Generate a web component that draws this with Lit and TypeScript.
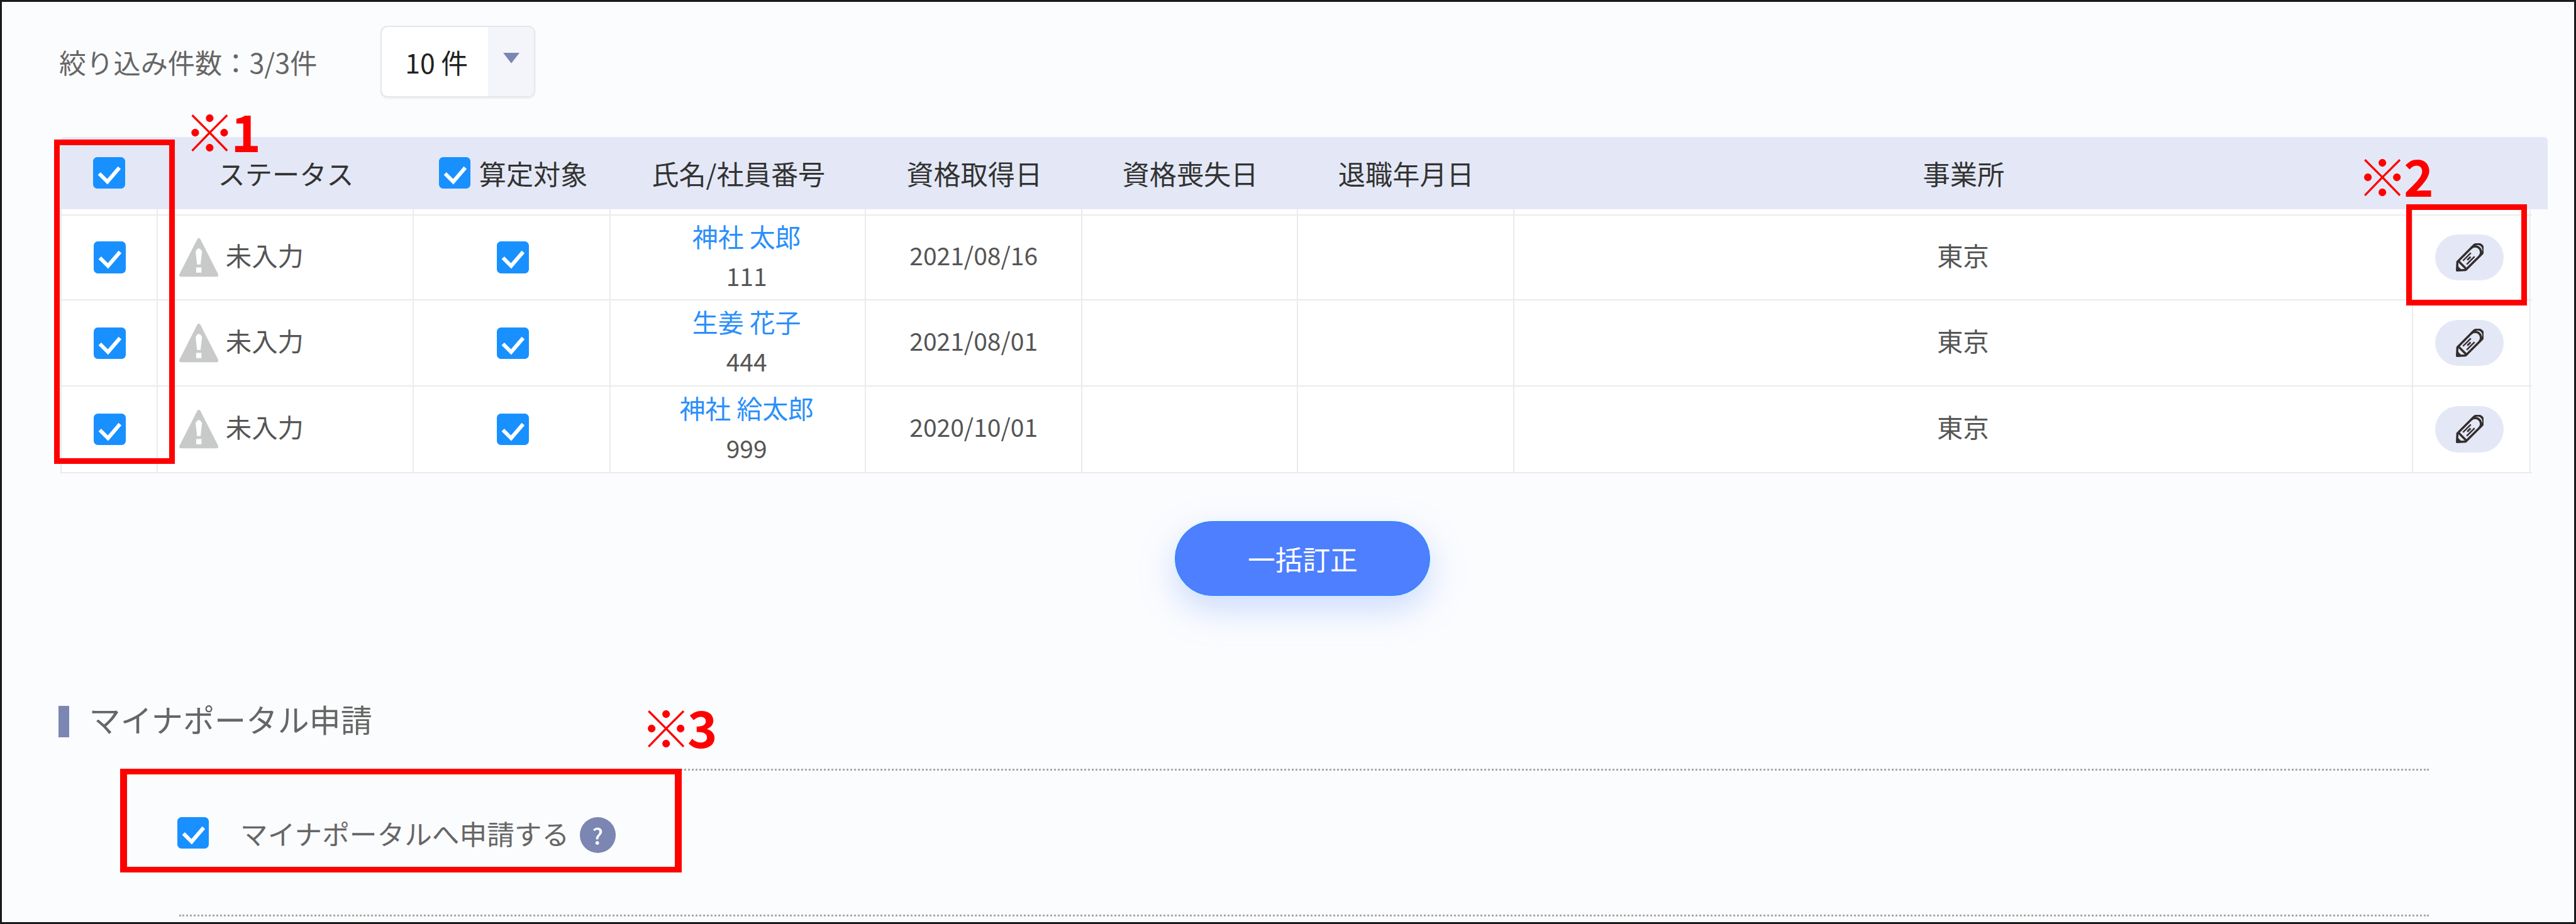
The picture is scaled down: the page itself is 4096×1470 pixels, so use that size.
import { LitElement, html, css } from "lit";
import { customElement } from "lit/decorators.js";

const rows = [
  { name: "神社 太郎", id: "111", date: "2021/08/16", h: 146 },
  { name: "生姜 花子", id: "444", date: "2021/08/01", h: 147.5 },
  { name: "神社 給太郎", id: "999", date: "2020/10/01", h: 148 },
];

const check = html`<span class="cb"><svg viewBox="0 0 54 54"><path d="M10.5 28 L24.5 42 L45 18" fill="none" stroke="#fff" stroke-width="6.5"/></svg></span>`;
const warn = html`<svg class="warn" viewBox="0 0 67 68"><path d="M33.5 4 L64 64 H3 Z" fill="#c8cac9" stroke="#c8cac9" stroke-width="6" stroke-linejoin="round"/><path d="M28 24 Q33.5 13 39 24 L36.5 46 H30.5 Z" fill="#fff"/><rect x="29" y="51" width="9" height="9" fill="#fff"/></svg>`;
const pencil = html`<svg class="pencil" viewBox="0 0 48 49"><g transform="translate(3 46.5) rotate(-45)" fill="none" stroke="#332e2e" stroke-width="3.8" stroke-linejoin="round"><path d="M0 0 L11 -10 H50 A10 10 0 0 1 50 10 H11 Z"/><path d="M0 0 L6 -5.5 L6 5.5 Z" fill="#332e2e" stroke-width="1"/><path d="M13 -10 V10"/><path d="M44 -10 A10 10 0 0 1 44 10"/><path d="M19 -4.5 H38" stroke-width="2.6"/><path d="M19 4.5 H38" stroke-width="2.6"/><path d="M25 0 H33" stroke-width="3"/></g></svg>`;

@customElement("app-root")
export class AppRoot extends LitElement {
  static styles = css`
    :host { display: block; width: 4096px; height: 1470px; overflow: hidden; }
    .page {
      zoom: 0.92922;
      position: relative;
      box-sizing: border-box;
      width: 4408px;
      height: 1582px;
      border: 4px solid #1a1a1a;
      background: #fbfcfe;
      padding: 41px 0 0 98px;
      font-family: "Noto Sans CJK JP", "Noto Sans", sans-serif;
      color: #555;
      font-size: 42px;
    }
    .toolbar { display: flex; align-items: center; height: 123px; }
    .count { width: 550px; color: #666; font-size: 46.5px; white-space: nowrap; }
    .select {
      display: flex; width: 265px; height: 123px; box-sizing: border-box;
      border: 3px solid #e6e7ec; border-radius: 12px; background: #fff; overflow: hidden;
      box-shadow: 0 2px 3px rgba(0, 0, 0, 0.06);
    }
    .select .val { flex: 1; display: flex; align-items: center; padding-left: 40px; color: #222; font-size: 46px; white-space: nowrap; }
    .select .btn { width: 79px; background: #f4f5fb; display: flex; justify-content: center; padding-top: 44px; box-sizing: border-box; }
    .arrow { width: 28px; height: 18px; }
    .table { margin: 67px 0 0 2px; width: 4256px; }
    .row { display: grid; grid-template-columns: 167px 438px 337px 437px 370px 369px 370px 1538px 201px; }
    .thead { width: 4256px; height: 124px; background: #e4e8f6; border-radius: 6px 6px 0 0; color: #333; font-size: 46.5px; }
    .thead .row { height: 100%; }
    .th, .td { display: flex; align-items: center; justify-content: center; box-sizing: border-box; }
    .th { gap: 15px; white-space: nowrap; }
    .th-target { padding-left: 3px; }
    .tbody { width: 4229px; background: #fff; }
    .tbody .row { border-bottom: 3px solid #ebebeb; box-sizing: border-box; }
    .tbody .spacer { height: 10.5px; }
    .td { border-right: 3px solid #ebebeb; white-space: nowrap; }
    .td:first-child { border-left: 3px solid #ebebeb; padding-left: 2px; }
    .cell-status { justify-content: flex-start; padding-left: 36px; gap: 13px; }
    .cell-check { padding-left: 4px; }
    .txt { margin-top: -10px; }
    .txt-lg { margin-top: -10px; font-size: 44.5px; }
    .name { display: flex; flex-direction: column; align-items: center; line-height: 67px; margin: -5px 0 0 30px; }
    .name a { color: #2a8ffb; text-decoration: none; font-size: 44px; }
    .cb { display: block; width: 54px; height: 54px; background: #1890ff; border-radius: 7px; flex: none; }
    .cb svg { display: block; width: 100%; height: 100%; }
    .warn { width: 67px; height: 68px; flex: none; }
    .pill { display: flex; align-items: center; justify-content: center; width: 118px; height: 79px; border-radius: 40px; background: #e4e8f6; margin-left: -6px; }
    .pencil { width: 48px; height: 49px; }
    .actions { width: 4256px; margin-top: 82px; display: flex; justify-content: center; }
    .primary {
      width: 437px; height: 128px; box-sizing: border-box; border: 2px solid #1e8cff; border-radius: 64px;
      background: #4d7fff; color: #fff; font-size: 47px; display: flex; align-items: center; justify-content: center;
      box-shadow: 0 22px 60px rgba(120, 160, 250, 0.36);
    }
    .section-title { display: flex; align-items: center; gap: 37px; height: 54px; margin: 188px 0 0 -1px; font-size: 54px; color: #666; white-space: nowrap; }
    .section-title span { margin: -10px 0 0 -3px; }
    .section-title i { display: block; width: 18px; height: 54px; background: #7b86b3; }
    .opts {
      display: flex; align-items: flex-start; height: 253px; width: 3850px; margin: 54px 0 0 205px; box-sizing: border-box;
      padding-top: 80px; border-top: 4px dotted #a8a8a8; border-bottom: 4px dotted #a8a8a8; font-size: 47px; color: #666; white-space: nowrap;
    }
    .opts .cb { margin-left: -3px; }
    .opts .lbl { margin-left: 54px; line-height: 54px; }
    .help {
      width: 61px; height: 61px; border-radius: 50%; background: #7b86b3; color: #fff; margin-left: 18px;
      display: flex; align-items: center; justify-content: center; font-size: 38px; line-height: 1; font-weight: 500; flex: none;
    }
    .mark { position: absolute; box-sizing: border-box; border: 10px solid #f00; }
    .m1 { left: 89px; top: 236px; width: 207px; height: 555px; }
    .m2 { left: 4114px; top: 347px; width: 207px; height: 173px; }
    .m3 { left: 202px; top: 1313px; width: 961px; height: 178px; border-width: 10px 12px; }
    .tag { position: absolute; display: flex; color: #f00; font-size: 87px; font-weight: 700; line-height: 87px; white-space: nowrap; }
    .tag span { font-weight: 400; width: 80px; }
    .t1 { left: 312px; top: 177px; }
    .t2 { left: 4030px; top: 253px; }
    .t3 { left: 1093px; top: 1197px; }
  `;

  render() {
    return html`
      <div class="page">
        <div class="toolbar">
          <div class="count">絞り込み件数：3/3件</div>
          <div class="select">
            <div class="val">10 件</div>
            <div class="btn"><svg class="arrow" viewBox="0 0 28 18"><path d="M0 0 H28 L14 18 Z" fill="#7b86b3"/></svg></div>
          </div>
        </div>
        <div class="table">
          <div class="thead">
            <div class="row">
              <div class="th">${check}</div>
              <div class="th">ステータス</div>
              <div class="th th-target">${check}算定対象</div>
              <div class="th">氏名/社員番号</div>
              <div class="th">資格取得日</div>
              <div class="th">資格喪失日</div>
              <div class="th">退職年月日</div>
              <div class="th">事業所</div>
              <div class="th"></div>
            </div>
          </div>
          <div class="tbody">
            <div class="row spacer">${[...Array(9)].map(() => html`<div class="td"></div>`)}</div>
            ${rows.map(
              (r) => html`
                <div class="row" style="height:${r.h}px">
                  <div class="td">${check}</div>
                  <div class="td cell-status">${warn}<span class="txt-lg">未入力</span></div>
                  <div class="td cell-check">${check}</div>
                  <div class="td"><div class="name"><a>${r.name}</a><span>${r.id}</span></div></div>
                  <div class="td"><span class="txt">${r.date}</span></div>
                  <div class="td"></div>
                  <div class="td"></div>
                  <div class="td"><span class="txt-lg">東京</span></div>
                  <div class="td"><div class="pill">${pencil}</div></div>
                </div>
              `
            )}
          </div>
        </div>
        <div class="actions"><div class="primary">一括訂正</div></div>
        <div class="section-title"><i></i><span>マイナポータル申請</span></div>
        <div class="opts">${check}<span class="lbl">マイナポータルへ申請する</span><span class="help">?</span></div>
        <div class="mark m1"></div>
        <div class="mark m2"></div>
        <div class="mark m3"></div>
        <div class="tag t1"><span>※</span>1</div>
        <div class="tag t2"><span>※</span>2</div>
        <div class="tag t3"><span>※</span>3</div>
      </div>
    `;
  }
}
